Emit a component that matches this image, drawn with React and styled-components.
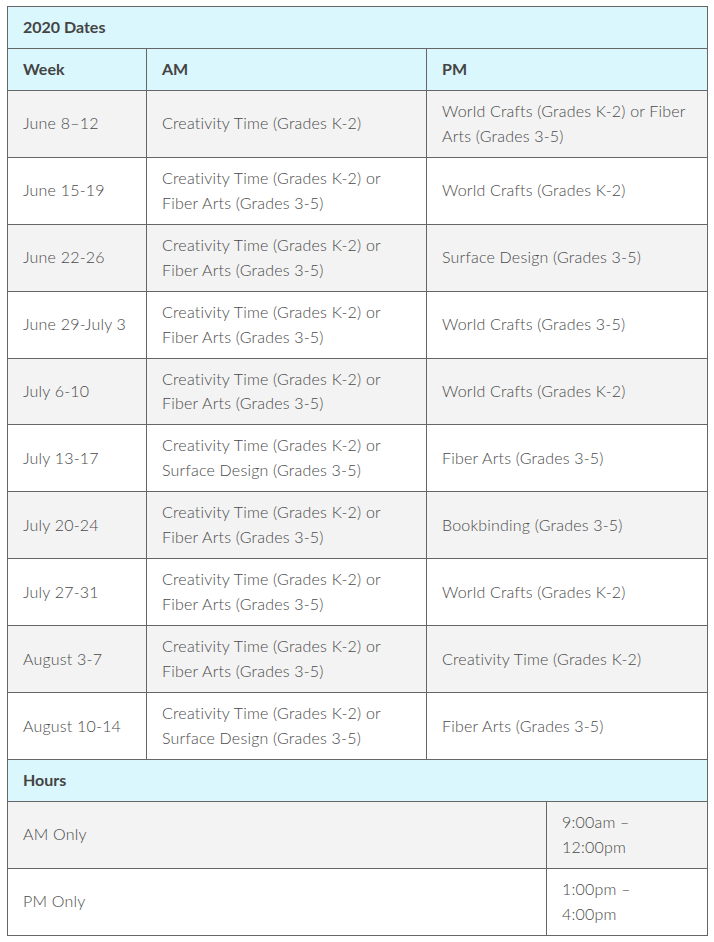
import React from 'react'
import styled, { createGlobalStyle } from 'styled-components'

const GlobalStyle = createGlobalStyle`
  body {
    margin: 0;
    background: #fff;
    font-family: Lato, "Open Sans", sans-serif;
  }
`

const Page = styled.div`
  padding: 6px 7px;
`

const Table = styled.table`
  width: 701px;
  border-collapse: collapse;
  table-layout: fixed;
  font-size: 16px;
  line-height: 24.95px;
  color: #4a4a4a;
  & + & {
    margin-top: -1px;
  }
`

const Title = styled.th`
  background: #daf7fd;
  border: 1px solid #666;
  padding: 8px 15px;
  text-align: left;
  font-weight: 700;
  color: #444;
`

const Cell = styled.td`
  background: ${p => (p.$shade ? '#f3f3f3' : '#fff')};
  border: 1px solid #666;
  padding: 8px 15px;
  vertical-align: middle;
  text-align: left;
  font-weight: 300;
  letter-spacing: 0.2px;
`

const Schedule = [
  ['June 8–12', 'Creativity Time (Grades K-2)', 'World Crafts (Grades K-2) or Fiber Arts (Grades 3-5)'],
  ['June 15-19', 'Creativity Time (Grades K-2) or Fiber Arts (Grades 3-5)', 'World Crafts (Grades K-2)'],
  ['June 22-26', 'Creativity Time (Grades K-2) or Fiber Arts (Grades 3-5)', 'Surface Design (Grades 3-5)'],
  ['June 29-July 3', 'Creativity Time (Grades K-2) or Fiber Arts (Grades 3-5)', 'World Crafts (Grades 3-5)'],
  ['July 6-10', 'Creativity Time (Grades K-2) or Fiber Arts (Grades 3-5)', 'World Crafts (Grades K-2)'],
  ['July 13-17', 'Creativity Time (Grades K-2) or Surface Design (Grades 3-5)', 'Fiber Arts (Grades 3-5)'],
  ['July 20-24', 'Creativity Time (Grades K-2) or Fiber Arts (Grades 3-5)', 'Bookbinding (Grades 3-5)'],
  ['July 27-31', 'Creativity Time (Grades K-2) or Fiber Arts (Grades 3-5)', 'World Crafts (Grades K-2)'],
  ['August 3-7', 'Creativity Time (Grades K-2) or Fiber Arts (Grades 3-5)', 'Creativity Time (Grades K-2)'],
  ['August 10-14', 'Creativity Time (Grades K-2) or Surface Design (Grades 3-5)', 'Fiber Arts (Grades 3-5)'],
]

const Hours = [
  ['AM Only', '9:00am –', '12:00pm'],
  ['PM Only', '1:00pm –', '4:00pm'],
]

const App = () => (
  <Page>
    <GlobalStyle />
    <Table>
      <colgroup>
        <col style={{ width: 139 }} />
        <col style={{ width: 280 }} />
        <col style={{ width: 281 }} />
      </colgroup>
      <thead>
        <tr>
          <Title colSpan={3}>2020 Dates</Title>
        </tr>
        <tr>
          <Title>Week</Title>
          <Title>AM</Title>
          <Title>PM</Title>
        </tr>
      </thead>
      <tbody>
        {Schedule.map(([week, am, pm], i) => (
          <tr key={week}>
            <Cell $shade={i % 2 === 0}>{week}</Cell>
            <Cell $shade={i % 2 === 0}>{am}</Cell>
            <Cell $shade={i % 2 === 0}>{pm}</Cell>
          </tr>
        ))}
      </tbody>
    </Table>
    <Table>
      <colgroup>
        <col style={{ width: 539 }} />
        <col style={{ width: 161 }} />
      </colgroup>
      <thead>
        <tr>
          <Title colSpan={2}>Hours</Title>
        </tr>
      </thead>
      <tbody>
        {Hours.map(([label, from, to], i) => (
          <tr key={label}>
            <Cell $shade={i % 2 === 0}>{label}</Cell>
            <Cell $shade={i % 2 === 0}>
              {from}
              <br />
              {to}
            </Cell>
          </tr>
        ))}
      </tbody>
    </Table>
  </Page>
)

export default App
